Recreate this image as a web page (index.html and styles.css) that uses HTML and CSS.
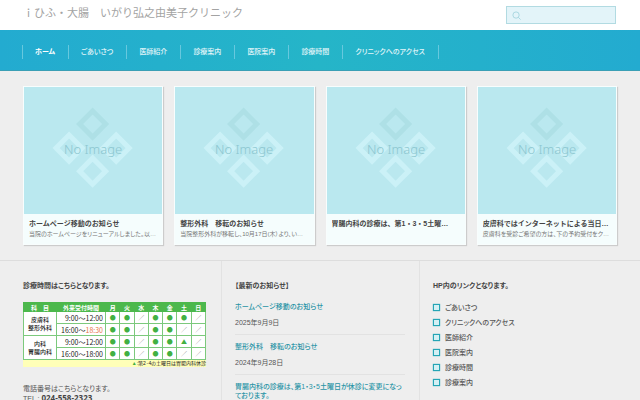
FILE: index.html
```html
<!DOCTYPE html>
<html lang="ja">
<head>
<meta charset="utf-8">
<meta name="viewport" content="width=device-width, initial-scale=1">
<title>ｉひふ・大腸　いがり弘之由美子クリニック</title>
<link rel="stylesheet" href="styles.css">
</head>
<body>
<svg class="defs" aria-hidden="true">
  <symbol id="no-image" viewBox="0 0 138 127">
    <g fill="none" stroke-width="5">
      <path stroke="#aee0e6" d="M68.500 24L81.500 37L68.500 50L55.500 37Z"/>
      <path stroke="#cbf1f7" d="M45 48L58 61L45 74L32 61Z"/>
      <path stroke="#cbf1f7" d="M92 48L105 61L92 74L79 61Z"/>
      <path stroke="#cbf1f7" d="M68.500 71L81.500 84L68.500 97L55.500 84Z"/>
    </g>
    <text class="no-image-text" x="69" y="67" text-anchor="middle">No Image</text>
  </symbol>
</svg>
<header class="header">
  <h1 class="site-title">ｉひふ・大腸　いがり弘之由美子クリニック</h1>
  <form class="search" role="search">
    <label class="search-label" for="q" aria-label="検索">
      <svg class="search-icon" viewBox="0 0 10 10"><circle cx="4.500" cy="4.500" r="3.500"/><path d="M7 7L9.500 9.500"/></svg>
    </label>
    <input class="search-input" id="q" type="search">
  </form>
</header>
<nav class="nav">
  <ul class="nav-list">
    <li class="nav-item"><a class="nav-link current" href="#">ホーム</a></li>
    <li class="nav-item"><a class="nav-link" href="#">ごあいさつ</a></li>
    <li class="nav-item"><a class="nav-link" href="#">医師紹介</a></li>
    <li class="nav-item"><a class="nav-link" href="#">診療案内</a></li>
    <li class="nav-item"><a class="nav-link" href="#">医院案内</a></li>
    <li class="nav-item"><a class="nav-link" href="#">診療時間</a></li>
    <li class="nav-item"><a class="nav-link" href="#">クリニックへのアクセス</a></li>
  </ul>
</nav>
<main class="cards">
  <article class="card">
    <svg class="card-image" viewBox="0 0 138 127"><use href="#no-image"/></svg>
    <div class="card-body">
      <h2 class="card-title">ホームページ移動のお知らせ</h2>
      <p class="card-text">当院のホームページをリニューアルしました。以…</p>
    </div>
  </article>
  <article class="card">
    <svg class="card-image" viewBox="0 0 138 127"><use href="#no-image"/></svg>
    <div class="card-body">
      <h2 class="card-title">整形外科　移転のお知らせ</h2>
      <p class="card-text">当院整形外科が移転し、10月17日(木）より、い…</p>
    </div>
  </article>
  <article class="card">
    <svg class="card-image" viewBox="0 0 138 127"><use href="#no-image"/></svg>
    <div class="card-body">
      <h2 class="card-title">胃腸内科の診療は、第1・3・5土曜…</h2>
    </div>
  </article>
  <article class="card">
    <svg class="card-image" viewBox="0 0 138 127"><use href="#no-image"/></svg>
    <div class="card-body">
      <h2 class="card-title">皮膚科ではインターネットによる当日…</h2>
      <p class="card-text">皮膚科を受診ご希望の方は、下の予約受付をク…</p>
    </div>
  </article>
</main>
<footer class="footer">
  <section class="column">
    <h3 class="column-title">診療時間はこちらとなります。</h3>
    <table class="hours">
      <thead>
        <tr><th class="dept">科　目</th><th class="time">外来受付時間</th><th>月</th><th>火</th><th>水</th><th>木</th><th>金</th><th>土</th><th>日</th></tr>
      </thead>
      <tbody>
        <tr><td class="dept-name" rowspan="2">皮膚科<br>整形外科</td><td class="time-cell">9:00～12:00</td><td>●</td><td>●</td><td class="off">／</td><td>●</td><td>●</td><td>●</td><td class="off">／</td></tr>
        <tr><td class="time-cell">16:00～<span class="late">18:30</span></td><td>●</td><td>●</td><td class="off">／</td><td>●</td><td>●</td><td class="off">／</td><td class="off">／</td></tr>
        <tr><td class="dept-name" rowspan="2">内科<br>胃腸内科</td><td class="time-cell">9:00～12:00</td><td>●</td><td>●</td><td class="off">／</td><td>●</td><td>●</td><td>▲</td><td class="off">／</td></tr>
        <tr><td class="time-cell">16:00～18:00</td><td>●</td><td>●</td><td class="off">／</td><td>●</td><td>●</td><td class="off">／</td><td class="off">／</td></tr>
      </tbody>
    </table>
    <p class="note"><span class="mark">▲</span>:第2･4の土曜日は胃腸内科休診</p>
    <p class="phone-label">電話番号はこちらとなります。</p>
    <p class="phone">TEL : <strong class="phone-number">024-558-2323</strong></p>
  </section>
  <section class="column">
    <h3 class="column-title">【最新のお知らせ】</h3>
    <ul class="news">
      <li class="news-item"><a class="news-link" href="#">ホームページ移動のお知らせ</a><time class="news-date" datetime="2025-09-09">2025年9月9日</time></li>
      <li class="news-item"><a class="news-link" href="#">整形外科　移転のお知らせ</a><time class="news-date" datetime="2024-09-28">2024年9月28日</time></li>
      <li class="news-item"><a class="news-link" href="#">胃腸内科の診療は、第1・3・5土曜日が休診に変更になっております。</a></li>
    </ul>
  </section>
  <section class="column">
    <h3 class="column-title">HP内のリンクとなります。</h3>
    <ul class="links">
      <li><a class="link" href="#">ごあいさつ</a></li>
      <li><a class="link" href="#">クリニックへのアクセス</a></li>
      <li><a class="link" href="#">医師紹介</a></li>
      <li><a class="link" href="#">医院案内</a></li>
      <li><a class="link" href="#">診療時間</a></li>
      <li><a class="link" href="#">診療案内</a></li>
    </ul>
  </section>
</footer>
</body>
</html>
```
FILE: styles.css
```css
* { box-sizing: border-box; margin: 0; padding: 0; }
body {
  background: #eee;
  color: #555;
  font-family: "Liberation Sans", "Noto Sans CJK JP", sans-serif;
  font-size: 7px;
  line-height: 9px;
  font-feature-settings: "palt";
}
ul { list-style: none; }
a { color: inherit; text-decoration: none; }
.defs { display: none; }

.header {
  display: flex;
  align-items: center;
  justify-content: space-between;
  height: 30px;
  padding: 0 24px 0 23px;
  background: #fff;
}
.site-title {
  padding-bottom: 4px;
  color: #a3a3a3;
  font-size: 11px;
  font-weight: 400;
  line-height: 16px;
  font-feature-settings: normal;
}
.search {
  display: flex;
  align-items: center;
  width: 110px;
  height: 18px;
  padding: 0 5px;
  border: 1px solid #b2dbe2;
  background: #e3f4f9;
}
.search-label { display: flex; }
.search-icon { width: 9px; height: 9px; fill: none; stroke: #a5d5df; }
.search-input {
  flex: 1;
  min-width: 0;
  border: 0;
  outline: 0;
  background: transparent;
  font-size: 8px;
}

.nav {
  height: 41px;
  padding: 15px 22px 0;
  border-bottom: 1px solid #3a9fb5;
  background: linear-gradient(90deg, #23abd0, #25b5c8 50%, #23abd0);
}
.nav-list { display: flex; border-left: 1px solid #67c8de; width: fit-content; }
.nav-item { border-right: 1px solid #67c8de; }
.nav-link {
  display: block;
  padding: 0 13px 0 12px;
  color: #e2f5f9;
  font-weight: 500;
  line-height: 14px;
}
.current { color: #fff; font-weight: 700; }

.cards {
  display: grid;
  grid-template-columns: repeat(4, 1fr);
  gap: 11px;
  padding: 15px 23px;
}
.card {
  border: 1px solid #f8fdfd;
  background: #f5fdfd;
  box-shadow: 1px 1px 1px #ccc;
}
.card-image { display: block; width: 100%; background: #bae8ef; }
.no-image-text {
  fill: #8bc6cf;
  font-family: "Noto Sans", sans-serif;
  font-size: 13px;
  font-weight: 300;
}
.card-body { min-height: 30px; padding: 5px; }
.card-title {
  overflow: hidden;
  color: #444;
  font-size: 7px;
  font-weight: 700;
  line-height: 10px;
  white-space: nowrap;
  font-feature-settings: normal;
}
.card-text {
  color: #777;
  font-size: 6px;
  line-height: 10px;
  white-space: nowrap;
}

.footer {
  display: grid;
  grid-template-columns: repeat(3, 1fr);
  padding: 0 23px;
  border-top: 1px solid #ddd;
}
.column { padding: 20px 14px 0 13px; border-left: 1px solid #e2e2e2; }
.column:first-child { padding-left: 0; padding-right: 15px; border-left: 0; }
.column-title { color: #444; font-size: 7px; font-weight: 700; }

.hours {
  width: 100%;
  margin-top: 12px;
  border-collapse: collapse;
  table-layout: fixed;
  background: #fff;
  color: #222;
  font-family: "Noto Sans CJK JP", sans-serif;
  font-size: 6px;
  line-height: 8px;
  text-align: center;
}
.hours th { height: 9px; border: 1px solid #4cb84c; background: #4cb84c; color: #fff; line-height: 7px; }
.hours th + th { border-left-color: #b5e0b5; }
.hours td { height: 12px; border: 1px solid #7cc97c; color: #42b042; }
.dept { width: 33px; }
.time { width: 49px; }
.hours .dept-name { color: #222; font-weight: 500; }
.hours .time-cell { color: #222; font-size: 7px; text-align: right; padding-right: 2px; }
.hours .off { color: #666; }
.hours .late { color: #e8764a; }
.note {
  background: #ffffb8;
  color: #222;
  font-size: 5px;
  line-height: 7px;
  text-align: right;
}
.mark { color: #42b042; }
.phone-label { margin-top: 17px; }
.phone { line-height: 10px; }
.phone-number { color: #444; font-family: "Open Sans", sans-serif; font-size: 8px; }

.news { margin-top: 12px; }
.news-item { padding-bottom: 7px; margin-bottom: 7px; border-bottom: 1px solid #e2e2e2; }
.news-item:last-child { padding: 0; margin: 0; border: 0; }
.news-link { display: block; color: #2a94a6; font-weight: 500; }
.news-date { display: block; margin-top: 7px; }

.links { margin-top: 10px; }
.link { display: flex; align-items: center; gap: 5px; height: 15px; font-weight: 500; }
.link::before {
  content: "";
  width: 5px;
  height: 5px;
  border: 1px solid #25a5b5;
  background: #d5f0f4;
  box-shadow: 0 0 1px #25a5b5;
}
```
